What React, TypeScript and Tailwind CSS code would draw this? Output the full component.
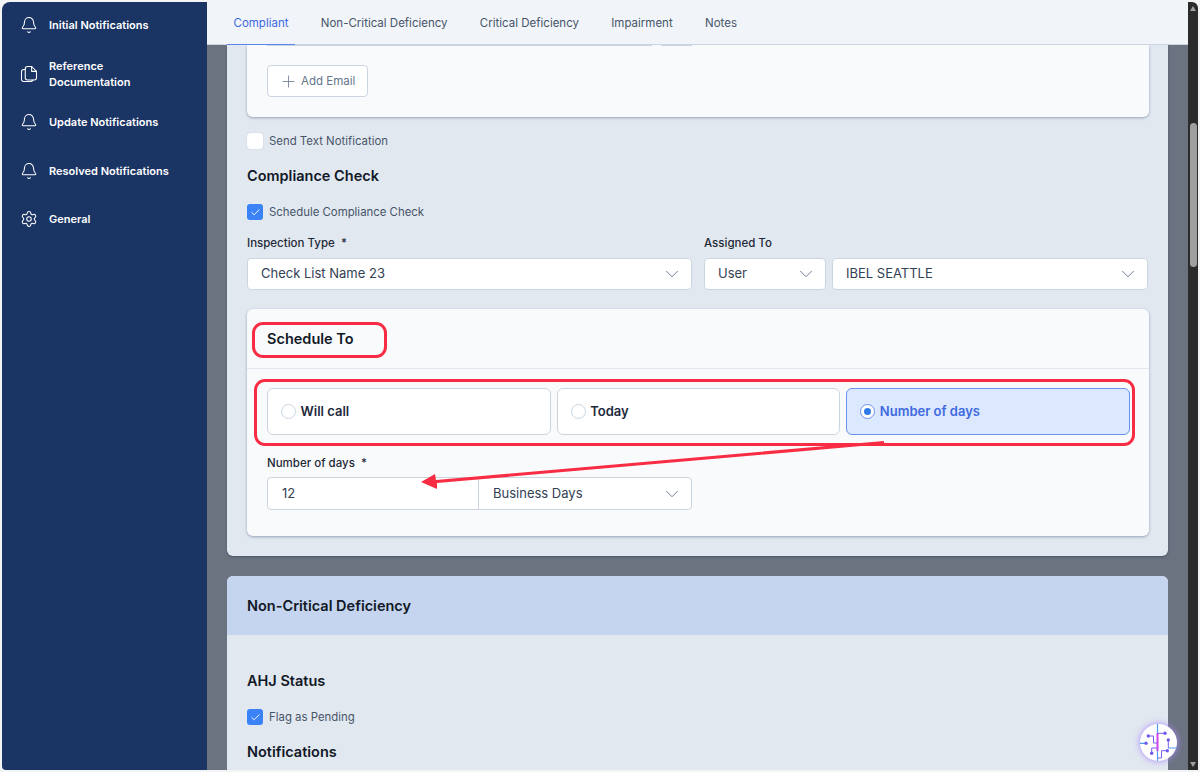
import React from "react";
import { Bell, Settings, Plus, ChevronDown, Check } from "lucide-react";

const DocsIcon = () => (
  <svg width="20" height="20" viewBox="0 0 24 24" fill="none" stroke="currentColor" strokeWidth="1.4" strokeLinecap="round" strokeLinejoin="round">
    <path d="M7 5.500V5a3 3 0 0 1 3-3h5.500L22 8.500V17a3 3 0 0 1-3 3H10a3 3 0 0 1-3-3z" />
    <path d="M15.500 2v6.500H22" />
    <path d="M7 6H5a3 3 0 0 0-3 3v10a3 3 0 0 0 3 3h9a3 3 0 0 0 3-2" />
  </svg>
);

const nav = [
  { label: ["Initial Notifications"], Icon: Bell },
  { label: ["Reference", "Documentation"], Icon: DocsIcon },
  { label: ["Update Notifications"], Icon: Bell },
  { label: ["Resolved Notifications"], Icon: Bell },
  { label: ["General"], Icon: Settings },
];

const tabs = ["Compliant", "Non-Critical Deficiency", "Critical Deficiency", "Impairment", "Notes"];

const CheckRow = ({ checked, label, className }: { checked?: boolean; label: string; className?: string }) => (
  <div className={`flex items-center gap-[6px] ${className ?? ""}`}>
    <span className={`flex h-4 w-4 items-center justify-center rounded-[3px] ${checked ? "bg-[#3b82f6]" : "bg-white shadow-[0_0_1px_#94a3b8]"}`}>
      {checked && <Check size={11} strokeWidth={2} className="text-white" />}
    </span>
    <span className="text-[11.400px] leading-4 text-[#475569]">{label}</span>
  </div>
);

const Select = ({ value, className }: { value: string; className?: string }) => (
  <div className={`flex h-[32px] items-center justify-between rounded-[4px] border border-[#cbd5e1] bg-white pl-[13px] pr-[8px] text-[13px] text-[#334155] ${className ?? ""}`}>
    <span>{value}</span>
    <ChevronDown size={22} strokeWidth={1} className="text-[#64748b]" />
  </div>
);

const Option = ({ label, active }: { label: string; active?: boolean }) => (
  <div className={`flex h-[47px] flex-1 items-center gap-[4.500px] rounded-[6px] border pl-[13px] ${active ? "border-[#6b93ee] bg-[#dbe8fd]" : "border-[#cbd5e1] bg-white"}`}>
    <span className={`flex h-[15px] w-[15px] items-center justify-center rounded-full border bg-white ${active ? "border-[#6b93ee]" : "border-[#cbd5e1]"}`}>
      {active && <span className="h-[7px] w-[7px] rounded-full bg-[#2f7ae5]" />}
    </span>
    <span className={`text-[13px] font-semibold ${active ? "text-[#3f6ae0]" : "text-[#1e293b]"}`}>{label}</span>
  </div>
);

export default function App() {
  return (
    <div className="relative flex h-[772px] w-[1200px] overflow-hidden bg-[#f3f4f6] px-[2px] [font-family:Inter,sans-serif]">
      {/* Sidebar */}
      <aside className="my-[2px] w-[205px] shrink-0 rounded-tl-[8px] rounded-bl-[4px] bg-[#1a3464] pl-[18px] text-white">
        <div className="-mt-px">
          {nav.map((n, i) => (
            <div key={i} className="flex h-[48.500px] items-center gap-[11px]">
              <span className="flex w-[18px] justify-center"><n.Icon size={20} strokeWidth={1.4} /></span>
              <span className="text-[11px] font-semibold leading-[16px]">
                {n.label.map((l) => <div key={l}>{l}</div>)}
              </span>
            </div>
          ))}
        </div>
      </aside>

      {/* Main column */}
      <div className="mb-[2px] flex w-[981px] shrink-0 flex-col">
        <nav className="z-10 flex h-[45px] shrink-0 items-stretch gap-[19.300px] border-b border-[#cbd5e1] bg-[#f1f4f9] pl-[20px] text-[11.500px]">
          {tabs.map((t, i) => (
            <div key={t} className={`flex items-center px-[6.500px] pt-[3px] ${i === 0 ? "mb-[-1px] border-b border-[#5b84ec] text-[#3f6ae0]" : "text-[#475569]"}`}>{t}</div>
          ))}
        </nav>

        <div className="min-h-0 flex-1 overflow-hidden bg-[#6b7280] px-[20px]">
          <section className="h-[511px] rounded-b-[6px] bg-[#e2e8f0] pb-[20px] pl-[20px] pr-[19px] shadow-[0_1px_2px_#475569]">
            {/* clipped email card */}
            <div className="h-[72px] rounded-b-[6px] bg-[#f9fafc] px-[20px] shadow-[0_1px_3px_#94a3b8]">
              <div className="flex gap-[9px]">
                <div className="h-[1px] w-[385px] bg-[#cbd5e1]" />
                <div className="h-[1px] w-[31px] bg-[#cbd5e1]" />
              </div>
              <div className="mt-[19px] flex h-[32px] w-[101px] items-center gap-[3px] rounded-[4px] border border-[#cbd5e1] bg-white pl-[11px] text-[11.500px] text-[#64748b]">
                <Plus size={19} strokeWidth={1} />
                <span className="pt-px">Add Email</span>
              </div>
            </div>

            <CheckRow label="Send Text Notification" className="mt-[16px]" />
            <h3 className="mt-[17px] text-[14.500px] font-semibold leading-[20px] text-[#111827]">Compliance Check</h3>
            <CheckRow checked label="Schedule Compliance Check" className="mt-[18px]" />

            <div className="mt-[15px] flex gap-[12px] pr-px text-[11.500px] font-medium leading-4 text-[#1f2937]">
              <label className="w-[445px]">Inspection Type&nbsp;&nbsp;*</label>
              <label>Assigned To</label>
            </div>
            <div className="mt-[7px] flex">
              <Select value="Check List Name 23" className="w-[445px]" />
              <Select value="User" className="ml-[12px] w-[122px]" />
              <Select value="IBEL SEATTLE" className="ml-[6px] w-[316px]" />
            </div>

            <div className="mt-[19px] h-[227px] rounded-[6px] bg-[#f9fafc] shadow-[0_1px_3px_#94a3b8]">
              <div className="flex h-[60px] items-center border-b border-[#e2e8f0] pl-[20px] text-[14.500px] font-semibold text-[#111827]">Schedule To</div>
              <div className="flex gap-[6px] pl-[20px] pr-[19px] pt-[19px]">
                <Option label="Will call" />
                <Option label="Today" />
                <Option label="Number of days" active />
              </div>
              <label className="ml-[20px] mt-[20px] block text-[11.500px] font-medium leading-4 text-[#1f2937]">Number of days&nbsp;&nbsp;*</label>
              <div className="ml-[20px] mt-[6px] flex h-[33px] w-[425px] rounded-[4px] border border-[#cbd5e1] bg-white text-[13px] text-[#334155]">
                <div className="flex w-[211px] items-center border-r border-[#cbd5e1] pl-[14px]">12</div>
                <div className="flex flex-1 items-center justify-between pl-[14px] pr-[8px]">
                  <span>Business Days</span>
                  <ChevronDown size={22} strokeWidth={1} className="text-[#64748b]" />
                </div>
              </div>
            </div>
          </section>

          <section className="mt-[20px] h-[300px] rounded-t-[6px] bg-[#e2e8f0]">
            <div className="flex h-[59px] items-center rounded-t-[6px] bg-[#c5d5ef] pl-[20px] text-[14.500px] font-semibold text-[#111827]">Non-Critical Deficiency</div>
            <div className="pl-[20px]">
              <h3 className="pt-[36px] text-[14.500px] font-semibold leading-[20px] text-[#111827]">AHJ Status</h3>
              <CheckRow checked label="Flag as Pending" className="mt-[18px]" />
              <h3 className="mt-[17px] text-[14.500px] font-semibold leading-[20px] text-[#111827]">Notifications</h3>
            </div>
          </section>
        </div>
      </div>

      {/* Scrollbar */}
      <div className="relative my-[2px] w-[10px] shrink-0 rounded-tr-[6px] bg-[#2b2b2b]">
        <span className="absolute left-[2px] top-[4px] h-0 w-0 border-x-[3.500px] border-b-[5px] border-x-transparent border-b-[#a0a0a0]" />
        <div className="absolute left-[2px] top-[121px] h-[144px] w-[7px] rounded-full bg-[#9f9f9f]" />
        <span className="absolute bottom-[3px] left-[2px] h-0 w-0 border-x-[3.500px] border-t-[5px] border-x-transparent border-t-[#a0a0a0]" />
      </div>

      {/* Screenshot annotations, drawn over the page */}
      <div className="absolute left-[252px] top-[322px] h-[36px] w-[135px] rounded-[11px] border-[3px] border-[#f82c42]" />
      <div className="absolute left-[254px] top-[379px] h-[67px] w-[881px] rounded-[11px] border-[3px] border-[#f82c42]" />
      <svg className="absolute left-0 top-0" width="1200" height="772" fill="none">
        <polygon points="884,441 884,444 437,483 437,489 421,482 435,474 436,480" fill="#f82c42" />
      </svg>

      {/* Assistant logo */}
      <div className="absolute left-[1140px] top-[724px] h-[37px] w-[37px] rounded-full bg-white shadow-[0_0_7px_#a78bfa]">
        <svg width="37" height="37" viewBox="0 0 37 37" fill="none" strokeWidth="1">
          <path d="M17.500 0v37M0 19.300h6M28 24h9" stroke="#4f9bf0" strokeWidth="1.200" />
          <path d="M17.500 9v18" stroke="#d946ef" strokeWidth="2" />
          <path d="M17.500 9.300H25M8.300 12H13.500v7H17.500M28.300 16v8M11.700 29.300V24H17.500M27.300 26.700H21.500V34H18" stroke="#7c5cf0" />
          <g fill="#6d5cf0">
            <circle cx="25" cy="9.300" r="1.700" />
            <circle cx="8.300" cy="12" r="1.700" />
            <circle cx="28.300" cy="16" r="1.700" />
            <circle cx="6" cy="19.300" r="1.700" />
            <circle cx="11.700" cy="29.300" r="1.700" />
            <circle cx="27.300" cy="26.700" r="1.700" />
          </g>
        </svg>
      </div>
    </div>
  );
}
